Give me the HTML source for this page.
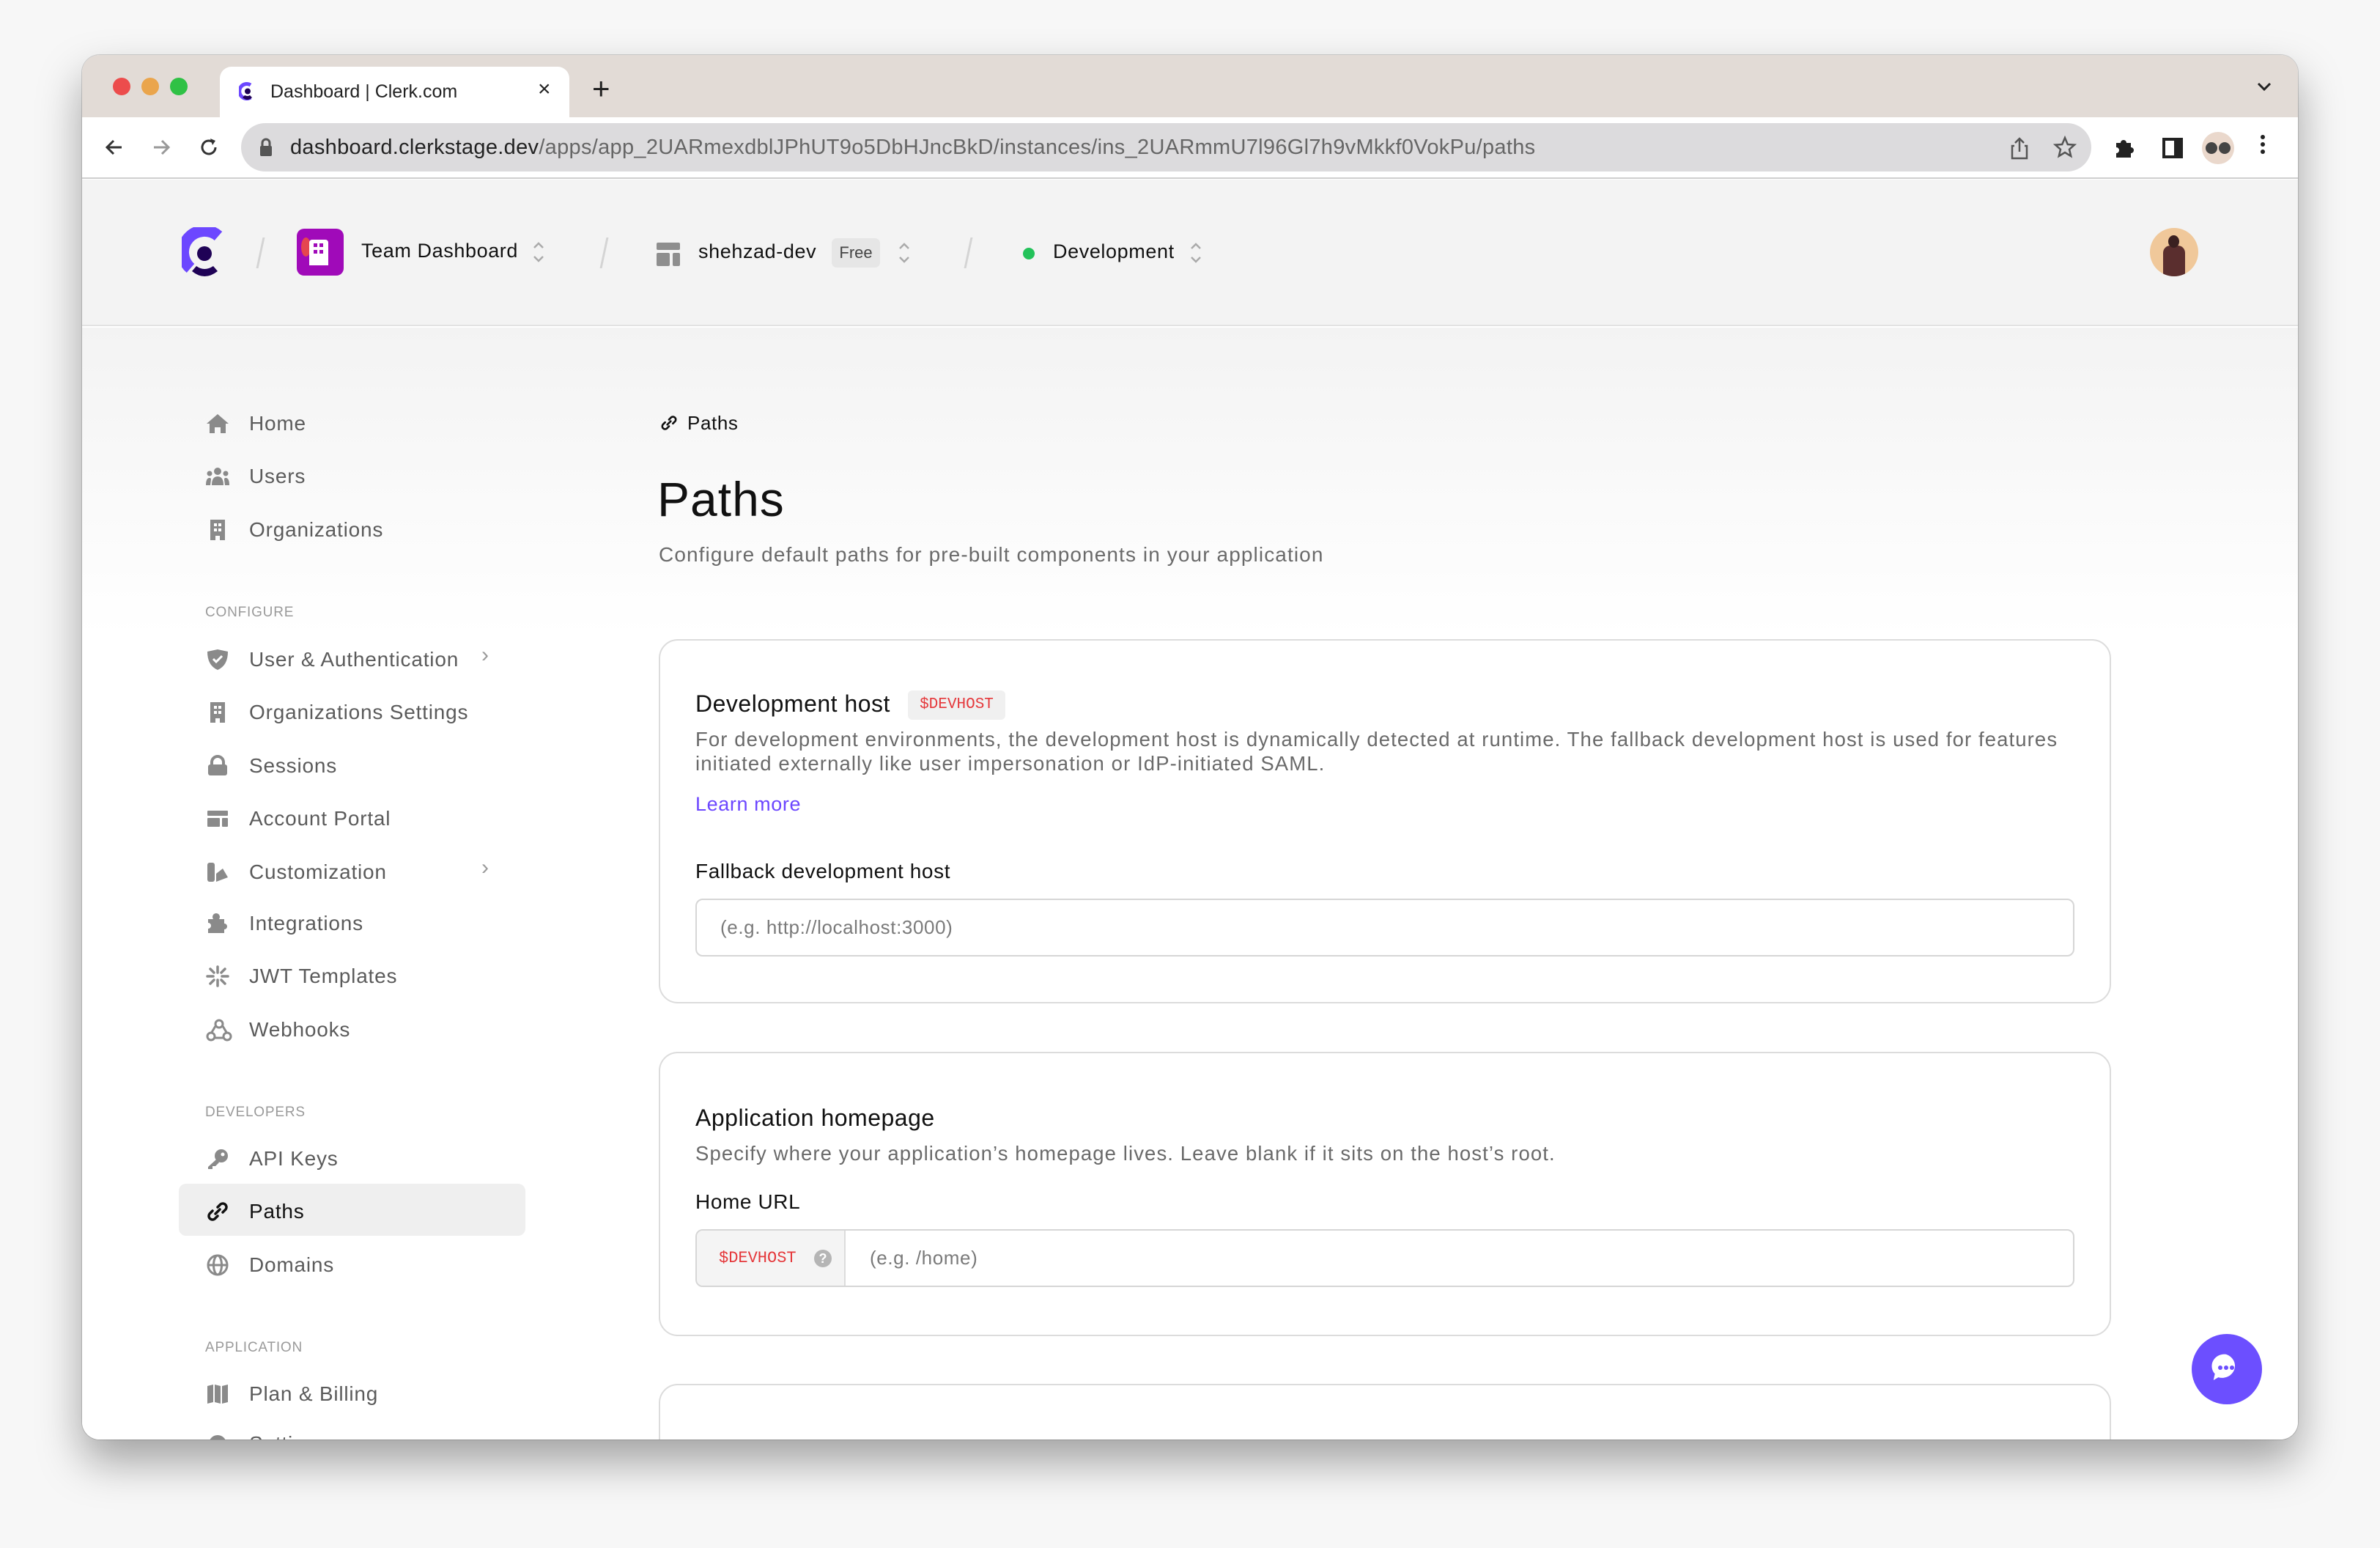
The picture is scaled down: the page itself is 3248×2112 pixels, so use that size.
<!DOCTYPE html>
<html><head><meta charset="utf-8">
<style>
*{box-sizing:border-box;margin:0;padding:0}
html,body{width:3248px;height:2112px;overflow:hidden;background:#f7f7f7;font-family:"Liberation Sans",sans-serif}
.abs{position:absolute}
#win{position:absolute;left:112px;top:75px;width:3024px;height:1889px;border-radius:24px;overflow:hidden;background:#fff;box-shadow:0 30px 60px rgba(0,0,0,.35),0 0 0 1px rgba(0,0,0,.15)}
.tabbar{left:0;top:0;width:3024px;height:85px;background:#e2dbd6}
.toolbar{left:0;top:85px;width:3024px;height:84px;background:#fff;border-bottom:2px solid #cfcfcf}
.dot{width:24px;height:24px;border-radius:50%;top:31px}
.sb .it{position:absolute;left:0;height:40px;display:flex;align-items:center;font-size:28px;color:#5b5b5b;letter-spacing:.8px}
.sb .it svg{position:absolute;left:168px;top:4px}
.sb .it span{position:absolute;left:228px;white-space:nowrap;line-height:40px;top:0}
.sec{position:absolute;left:168px;font-size:19px;color:#9a9a9a;letter-spacing:.8px}
.chev{position:absolute;left:545px;font-size:30px;color:#9a9a9a}
.card{position:absolute;left:787px;width:1982px;border:2px solid #dcdcdc;border-radius:26px;background:#fff}
.h{position:absolute;left:48px;font-size:32px;color:#111;font-weight:500;letter-spacing:.5px}
.d{position:absolute;left:48px;font-size:27.5px;color:#6a6a6a;line-height:33px;white-space:nowrap;letter-spacing:1.1px}
.lab{position:absolute;left:48px;font-size:28px;color:#111;letter-spacing:.6px}
.inp{position:absolute;left:48px;width:1882px;height:79px;border:2px solid #d6d6d6;border-radius:10px;background:#fff;overflow:hidden}
.mono{font-family:"Liberation Mono",monospace;color:#e5383b}
.hd{letter-spacing:.6px}
</style></head><body>
<div id="win">
 <div class="abs tabbar"></div>
 <div class="abs dot" style="left:42px;background:#ec4c4c"></div>
 <div class="abs dot" style="left:81px;background:#eaa54c"></div>
 <div class="abs dot" style="left:120px;background:#2fc145"></div>
 <div class="abs" style="left:188px;top:16px;width:477px;height:70px;background:#fff;border-radius:16px 16px 0 0"></div>
 <svg class="abs" style="left:214px;top:37px" width="22" height="26" viewBox="0 0 22 26"><path d="M16 4A10 10 0 1 0 16 21" fill="none" stroke="#6c47ff" stroke-width="5"/><circle cx="12" cy="12.5" r="4" fill="#1f0256"/><path d="M5 21Q12 27 18 21L15 18Q12 20 8 18Z" fill="#1f0256"/></svg>
 <div class="abs" style="left:257px;top:36px;font-size:25px;color:#222">Dashboard | Clerk.com</div>
 <div class="abs" style="left:622px;top:30px;font-size:30px;color:#222">×</div>
 <div class="abs" style="left:696px;top:22px;font-size:42px;color:#222;font-weight:300">+</div>
 <svg class="abs" style="left:2966px;top:34px" width="24" height="18" viewBox="0 0 24 18"><path d="M4 5L12 13L20 5" fill="none" stroke="#222" stroke-width="3"/></svg>
 <div class="abs toolbar"></div>
 <svg class="abs" style="left:28px;top:110px" width="32" height="32" viewBox="0 0 32 32"><path d="M26 16H7M15 7L6 16L15 25" fill="none" stroke="#333" stroke-width="3"/></svg>
 <svg class="abs" style="left:92px;top:110px" width="32" height="32" viewBox="0 0 32 32"><path d="M6 16H25M17 7L26 16L17 25" fill="none" stroke="#999" stroke-width="3"/></svg>
 <svg class="abs" style="left:157px;top:110px" width="32" height="32" viewBox="0 0 32 32"><path d="M25 16A9 9 0 1 1 21 8.5" fill="none" stroke="#333" stroke-width="3"/><path d="M18 4L25 7L21 13Z" fill="#333"/></svg>
 <div class="abs" style="left:217px;top:93px;width:2525px;height:66px;background:#dcdbdd;border-radius:33px"></div>
 <svg class="abs" style="left:242px;top:113px" width="18" height="26" viewBox="0 0 18 26"><path d="M4 11V7a5 5 0 0 1 10 0v4" fill="none" stroke="#555" stroke-width="3"/><rect x="1" y="11" width="16" height="14" rx="2" fill="#555"/></svg>
 <div class="abs" style="left:284px;top:110px;font-size:29px;color:#222;white-space:nowrap;letter-spacing:.3px">dashboard.clerkstage.dev<span style="color:#666">/apps/app_2UARmexdblJPhUT9o5DbHJncBkD/instances/ins_2UARmmU7l96Gl7h9vMkkf0VokPu/paths</span></div>
 <svg class="abs" style="left:2629px;top:110px" width="30" height="34" viewBox="0 0 30 34"><path d="M15 22V4M9 10L15 4L21 10M8 14H5V31H25V14H22" fill="none" stroke="#555" stroke-width="2.5"/></svg>
 <svg class="abs" style="left:2690px;top:110px" width="32" height="32" viewBox="0 0 32 32"><path d="M16 3L19.8 12 29 12.6 22 18.8 24.2 28 16 23 7.8 28 10 18.8 3 12.6 12.2 12Z" fill="none" stroke="#555" stroke-width="2.5"/></svg>
 <svg class="abs" style="left:2772px;top:110px" width="32" height="32" viewBox="0 0 32 32"><path d="M4 10H10A4 4 0 1 1 18 10H24V16A4 4 0 1 1 24 24V30H4V24A4 4 0 1 0 4 16Z" fill="#222"/></svg>
 <div class="abs" style="left:2839px;top:113px;width:28px;height:28px;border:4px solid #222;border-right-width:12px"></div>
 <div class="abs" style="left:2893px;top:105px;width:44px;height:44px;border-radius:50%;background:#ead8cc"></div>
 <div class="abs" style="left:2898px;top:119px;width:16px;height:16px;border-radius:50%;background:#444"></div>
 <div class="abs" style="left:2916px;top:119px;width:16px;height:16px;border-radius:50%;background:#444"></div>
 <div class="abs" style="left:2973px;top:109px;width:6px;height:6px;border-radius:50%;background:#222;box-shadow:0 10px 0 #222,0 20px 0 #222"></div>

 <!-- app header -->
 <div class="abs" style="left:0;top:170px;width:3024px;height:200px;background:#f3f3f3;border-bottom:2px solid #e2e2e2"></div>
 <div class="abs" style="left:0;top:372px;width:3024px;height:1517px;background:linear-gradient(#f3f3f3,#fff 420px)"></div>
 <svg class="abs" style="left:136px;top:235px" width="64" height="74" viewBox="0 0 64 74"><path d="M50 12A28 28 0 0 0 12 56" fill="none" stroke="#6c47ff" stroke-width="16"/><circle cx="31" cy="36" r="10" fill="#1f0256"/><path d="M14 60Q31 74 49 60L43 53Q31 61 20 53Z" fill="#1f0256"/></svg>
 <div class="abs" style="left:242px;top:249px;width:3px;height:42px;background:#d4d4d4;transform:skewX(-12deg)"></div>
 <div class="abs" style="left:293px;top:237px;width:64px;height:64px;border-radius:10px;background:#a00ab9"></div>
 <div class="abs" style="left:299px;top:249px;width:13px;height:26px;border-radius:50%;background:#e5464f"></div>
 <div class="abs" style="left:310px;top:252px;width:26px;height:35px;background:#fff;border-radius:4px 4px 0 0"></div>
 <div class="abs" style="left:316px;top:257px;width:5px;height:5px;background:#a00ab9;box-shadow:8px 0 #a00ab9,0 9px #a00ab9,8px 9px #a00ab9"></div>
 <div class="abs hd" style="left:381px;top:252px;font-size:27px;color:#111;font-weight:500">Team Dashboard</div>
 <svg class="abs" style="left:612px;top:249px" width="22" height="40" viewBox="0 0 22 40"><path d="M5 14L11 8L17 14M5 26L11 32L17 26" fill="none" stroke="#aaa" stroke-width="2.5"/></svg>
 <div class="abs" style="left:711px;top:249px;width:3px;height:42px;background:#d4d4d4;transform:skewX(-12deg)"></div>
 <div class="abs" style="left:784px;top:256px;width:32px;height:10px;background:#8e8e8e;border-radius:2px"></div>
 <div class="abs" style="left:784px;top:270px;width:18px;height:18px;background:#8e8e8e;border-radius:2px"></div>
 <div class="abs" style="left:806px;top:270px;width:10px;height:18px;background:#8e8e8e;border-radius:2px"></div>
 <div class="abs hd" style="left:841px;top:253px;font-size:27px;color:#111;font-weight:500">shehzad-dev</div>
 <div class="abs" style="left:1023px;top:250px;width:66px;height:40px;background:#e6e6e6;border-radius:7px;font-size:22px;color:#444;text-align:center;line-height:40px">Free</div>
 <svg class="abs" style="left:1111px;top:250px" width="22" height="40" viewBox="0 0 22 40"><path d="M5 14L11 8L17 14M5 26L11 32L17 26" fill="none" stroke="#aaa" stroke-width="2.5"/></svg>
 <div class="abs" style="left:1208px;top:249px;width:3px;height:42px;background:#d4d4d4;transform:skewX(-12deg)"></div>
 <div class="abs" style="left:1284px;top:263px;width:16px;height:16px;border-radius:50%;background:#23c25a"></div>
 <div class="abs hd" style="left:1325px;top:253px;font-size:27px;color:#111;font-weight:500">Development</div>
 <svg class="abs" style="left:1509px;top:250px" width="22" height="40" viewBox="0 0 22 40"><path d="M5 14L11 8L17 14M5 26L11 32L17 26" fill="none" stroke="#aaa" stroke-width="2.5"/></svg>
 <div class="abs" style="left:2822px;top:236px;width:66px;height:66px;border-radius:50%;background:#f0c89a;overflow:hidden">
  <div class="abs" style="left:18px;top:24px;width:30px;height:44px;background:#5a2e2e;border-radius:10px 10px 0 0"></div>
  <div class="abs" style="left:25px;top:10px;width:15px;height:17px;background:#3a2020;border-radius:50%"></div>
 </div>

 <!-- sidebar -->
 <div class="sb">
  <div class="abs" style="left:132px;top:1540px;width:473px;height:71px;background:#efefef;border-radius:10px"></div>
  <div class="it" style="top:483px"><svg width="34" height="32" viewBox="0 0 34 32"><path d="M17 3L32 16H28V29H21V21H13V29H6V16H2Z" fill="#8a8a8a"/></svg><span>Home</span></div>
  <div class="it" style="top:555px"><svg width="34" height="32" viewBox="0 0 34 32"><circle cx="17" cy="9" r="5" fill="#8a8a8a"/><circle cx="6" cy="12" r="3.5" fill="#8a8a8a"/><circle cx="28" cy="12" r="3.5" fill="#8a8a8a"/><path d="M9 28Q9 16 17 16Q25 16 25 28Z M1 28Q1 18 6 18Q8 18 8 20L7 28Z M33 28Q33 18 28 18Q26 18 26 20L27 28Z" fill="#8a8a8a"/></svg><span>Users</span></div>
  <div class="it" style="top:628px"><svg width="34" height="32" viewBox="0 0 34 32"><path d="M7 2H27V30H20V24H14V30H7Z" fill="#8a8a8a"/><rect x="12" y="7" width="4" height="4" fill="#fff"/><rect x="18" y="7" width="4" height="4" fill="#fff"/><rect x="12" y="14" width="4" height="4" fill="#fff"/><rect x="18" y="14" width="4" height="4" fill="#fff"/></svg><span>Organizations</span></div>
  <div class="sec" style="top:750px">CONFIGURE</div>
  <div class="it" style="top:805px"><svg width="34" height="32" viewBox="0 0 34 32"><path d="M3 5L17 2L31 5Q31 24 17 30Q3 24 3 5Z" fill="#8a8a8a"/><path d="M11 15L15 19L23 11" fill="none" stroke="#fff" stroke-width="3"/></svg><span>User &amp; Authentication</span></div>
  <div class="chev" style="top:802px">›</div>
  <div class="it" style="top:877px"><svg width="34" height="32" viewBox="0 0 34 32"><path d="M7 2H27V30H20V24H14V30H7Z" fill="#8a8a8a"/><rect x="12" y="7" width="4" height="4" fill="#fff"/><rect x="18" y="7" width="4" height="4" fill="#fff"/><rect x="12" y="14" width="4" height="4" fill="#fff"/><rect x="18" y="14" width="4" height="4" fill="#fff"/></svg><span>Organizations Settings</span></div>
  <div class="it" style="top:950px"><svg width="34" height="32" viewBox="0 0 34 32"><path d="M9 14V11a8 8 0 0 1 16 0v3" fill="none" stroke="#8a8a8a" stroke-width="4"/><rect x="4" y="14" width="26" height="15" rx="3" fill="#8a8a8a"/></svg><span>Sessions</span></div>
  <div class="it" style="top:1022px"><svg width="34" height="32" viewBox="0 0 34 32"><rect x="3" y="5" width="28" height="7" rx="1" fill="#8a8a8a"/><rect x="3" y="15" width="17" height="12" rx="1" fill="#8a8a8a"/><rect x="23" y="15" width="8" height="12" rx="1" fill="#8a8a8a"/></svg><span>Account Portal</span></div>
  <div class="it" style="top:1095px"><svg width="34" height="32" viewBox="0 0 34 32"><rect x="3" y="3" width="10" height="26" rx="3" fill="#8a8a8a"/><path d="M15 29V18L24 11L31 23Z M15 29H31" fill="#8a8a8a"/></svg><span>Customization</span></div>
  <div class="chev" style="top:1092px">›</div>
  <div class="it" style="top:1165px"><svg width="34" height="32" viewBox="0 0 34 32"><path d="M4 10H11A5 5 0 1 1 19 10H26V16A4 4 0 1 1 26 24V29H4V23A4 4 0 1 0 4 15Z" fill="#8a8a8a"/></svg><span>Integrations</span></div>
  <div class="it" style="top:1237px"><svg width="34" height="32" viewBox="0 0 34 32"><g stroke="#8a8a8a" stroke-width="3.5" stroke-linecap="round"><path d="M17 3V11M17 21V29M3 16H11M23 16H31M7 6L12 11M22 21L27 26M7 26L12 21M22 11L27 6"/></g></svg><span>JWT Templates</span></div>
  <div class="it" style="top:1310px"><svg width="38" height="34" viewBox="0 0 38 34"><g fill="none" stroke="#8a8a8a" stroke-width="3"><circle cx="19" cy="8" r="5"/><circle cx="8" cy="25" r="5"/><circle cx="30" cy="25" r="5"/><path d="M14 11L8 21M24 11L30 21M13 27H25"/></g></svg><span>Webhooks</span></div>
  <div class="sec" style="top:1432px">DEVELOPERS</div>
  <div class="it" style="top:1486px"><svg width="34" height="32" viewBox="0 0 34 32"><circle cx="22" cy="12" r="9" fill="#8a8a8a"/><path d="M15 17L4 27V30H10V26H14L19 21Z" fill="#8a8a8a"/><circle cx="24" cy="10" r="2.5" fill="#fff"/></svg><span>API Keys</span></div>
  <div class="it" style="top:1558px;color:#111"><svg width="34" height="32" viewBox="0 0 34 32"><g fill="none" stroke="#111" stroke-width="3.5" stroke-linecap="round"><path d="M14 19L20 13"/><path d="M17 10L21 6A5 5 0 0 1 28 13L24 17"/><path d="M17 22L13 26A5 5 0 0 1 6 19L10 15"/></g></svg><span style="font-weight:500">Paths</span></div>
  <div class="it" style="top:1631px"><svg width="34" height="32" viewBox="0 0 34 32"><g fill="none" stroke="#8a8a8a" stroke-width="3"><circle cx="17" cy="16" r="13"/><ellipse cx="17" cy="16" rx="5.5" ry="13"/><path d="M4 16H30"/></g></svg><span>Domains</span></div>
  <div class="sec" style="top:1753px">APPLICATION</div>
  <div class="it" style="top:1807px"><svg width="34" height="32" viewBox="0 0 34 32"><path d="M3 5L11 3V27L3 29Z M13 3L21 5V29L13 27Z M23 5L31 3V27L23 29Z" fill="#8a8a8a"/></svg><span>Plan &amp; Billing</span></div>
  <div class="it" style="top:1875px"><svg width="34" height="32" viewBox="0 0 34 32"><circle cx="17" cy="16" r="12" fill="#8a8a8a"/></svg><span>Settings</span></div>
 </div>

 <!-- main -->
 <svg class="abs" style="left:788px;top:489px" width="26" height="26" viewBox="0 0 34 32"><g fill="none" stroke="#111" stroke-width="3.5" stroke-linecap="round"><path d="M14 19L20 13"/><path d="M17 10L21 6A5 5 0 0 1 28 13L24 17"/><path d="M17 22L13 26A5 5 0 0 1 6 19L10 15"/></g></svg>
 <div class="abs" style="left:826px;top:487px;font-size:26px;color:#111;letter-spacing:.6px">Paths</div>
 <div class="abs" style="left:785px;top:568px;font-size:66px;color:#111;letter-spacing:1px">Paths</div>
 <div class="abs" style="left:787px;top:666px;font-size:28px;color:#6a6a6a;letter-spacing:1.1px">Configure default paths for pre-built components in your application</div>

 <div class="card" style="top:797px;height:497px">
  <div class="h" style="top:68px">Development host</div>
  <div class="abs mono" style="left:338px;top:68px;width:133px;height:40px;background:#f0f0f0;border-radius:6px;font-size:21px;line-height:40px;text-align:center">$DEVHOST</div>
  <div class="d" style="top:118px">For development environments, the development host is dynamically detected at runtime. The fallback development host is used for features<br>initiated externally like user impersonation or IdP-initiated SAML.</div>
  <div class="abs" style="left:48px;top:208px;font-size:27px;color:#6c47ff;letter-spacing:.6px">Learn more</div>
  <div class="lab" style="top:299px">Fallback development host</div>
  <div class="inp" style="top:352px"><div class="abs" style="left:32px;top:22px;font-size:26px;color:#7a7a7a;letter-spacing:.6px">(e.g. http://localhost:3000)</div></div>
 </div>

 <div class="card" style="top:1360px;height:388px">
  <div class="h" style="top:70px">Application homepage</div>
  <div class="d" style="top:120px">Specify where your application’s homepage lives. Leave blank if it sits on the host’s root.</div>
  <div class="lab" style="top:187px">Home URL</div>
  <div class="inp" style="top:240px">
   <div class="abs" style="left:0;top:0;width:203px;height:79px;background:#f4f4f4;border-right:2px solid #dcdcdc"></div>
   <div class="abs mono" style="left:30px;top:25px;font-size:22px">$DEVHOST</div>
   <div class="abs" style="left:160px;top:26px;width:24px;height:24px;border-radius:50%;background:#b5b5b5;color:#fff;font-size:18px;text-align:center;line-height:24px;font-weight:bold">?</div>
   <div class="abs" style="left:236px;top:22px;font-size:26px;color:#7a7a7a;letter-spacing:.6px">(e.g. /home)</div>
  </div>
 </div>

 <div class="card" style="top:1813px;height:200px"></div>

 <div class="abs" style="left:2879px;top:1745px;width:96px;height:96px;border-radius:50%;background:#6c4fff"></div>
 <svg class="abs" style="left:2904px;top:1770px" width="46" height="46" viewBox="0 0 46 46"><path d="M23 4A18 17 0 1 1 12 37L5 41L7 32A18 17 0 0 1 23 4Z" fill="#fff" transform="translate(0,-1) scale(.95)"/><circle cx="14" cy="21" r="3" fill="#6c4fff"/><circle cx="22" cy="21" r="3" fill="#6c4fff"/><circle cx="30" cy="21" r="3" fill="#6c4fff"/></svg>
</div>
</body></html>
